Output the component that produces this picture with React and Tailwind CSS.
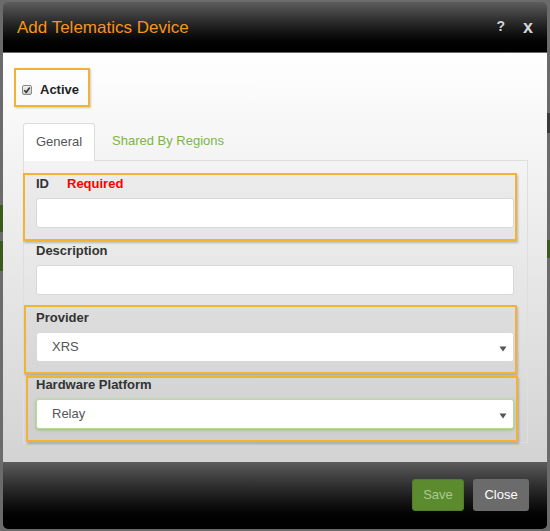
import React from "react";

const font = { fontFamily: '"Liberation Sans", Arial, sans-serif' };

function Field({ label, extra, children }) {
  return (
    <div className="relative">
      <div className="h-[17px] leading-[17px] text-[13px] font-bold text-[#333] mb-[6px] flex">
        <span>{label}</span>
        {extra ? <span className="ml-[18px] text-[#ff0000]">{extra}</span> : null}
      </div>
      {children}
    </div>
  );
}

function Arrow() {
  return (
    <svg width="8" height="6" viewBox="0 0 8 6" className="absolute right-[6px] top-[13px]">
      <path d="M0.5 0.5 H7.5 L4 5.5 Z" fill="#555" />
    </svg>
  );
}

export default function App() {
  return (
    <div className="relative w-[550px] h-[531px] bg-[#6b6b6b] pt-[2px] px-[3px] overflow-hidden" style={font}>
      {/* page content peeking behind the modal */}
      <div className="absolute left-0 top-[205px] w-[3px] h-[27px] bg-[#3d5a1d]" />
      <div className="absolute left-0 top-[241px] w-[3px] h-[30px] bg-[#3d5a1d]" />
      <div className="absolute right-0 top-[113px] w-[3px] h-[20px] bg-[#3a3a3a]" />
      <div className="absolute right-0 top-[240px] w-[3px] h-[18px] bg-[#3d5a1d]" />

      <div className="relative w-[544px] h-[527px] rounded-[5px] overflow-hidden flex flex-col">
        {/* header */}
        <div className="h-[51px] shrink-0 flex items-center justify-between pl-[14px] pr-[14px] bg-gradient-to-b from-[#5e5e5e] to-[#000] border-b border-[#6a6a6a]">
          <span className="text-[17px] text-[#f7941d] leading-none">Add Telematics Device</span>
          <div className="flex items-start gap-[18px] text-[#d4d4d4] font-bold">
            <span className="text-[14px] leading-none mt-[1px]">?</span>
            <span className="text-[18px] leading-none">x</span>
          </div>
        </div>

        {/* body */}
        <div className="h-[409px] shrink-0 bg-gradient-to-b from-[#ffffff] to-[#d2d3d2] pt-[15px]">
          <div className="ml-[11px] w-[76px] h-[39px] border-2 border-[#f2b233] shadow-[1px_1px_2px_rgba(0,0,0,0.2)] flex items-center pl-[6px] pt-[5px]">
            <svg width="10" height="10" viewBox="0 0 10 10">
              <defs>
                <linearGradient id="cb" x1="0" y1="0" x2="0" y2="1">
                  <stop offset="0" stopColor="#f4f4f4" />
                  <stop offset="1" stopColor="#c9c9c9" />
                </linearGradient>
              </defs>
              <rect x="0.5" y="0.5" width="9" height="9" rx="1.5" fill="url(#cb)" stroke="#8a8a8a" />
              <path d="M2.3 5.2 L4.2 7.2 L7.8 2.6" fill="none" stroke="#333" strokeWidth="1.6" />
            </svg>
            <span className="ml-[8px] text-[13px] font-bold text-[#222]">Active</span>
          </div>

          {/* tabs */}
          <div className="mt-[15px] ml-[20px] flex items-end h-[38px]">
            <div className="relative z-10 w-[72px] h-[38px] bg-white border border-b-0 border-[#dcdcdc] rounded-t-[3px] flex items-center justify-center text-[13px] text-[#555] mb-[-1px] pb-[2px]">
              General
            </div>
            <div className="h-[38px] flex items-center pl-[17px] text-[13px] text-[#7db544]">
              Shared By Regions
            </div>
          </div>

          {/* panel */}
          <div className="relative ml-[20px] w-[505px] h-[283px] border border-[#dedede] pt-[14px] pl-[12px] pr-[13px] pb-[13px] flex flex-col gap-[14px]">
            <div className="absolute left-[-1px] top-[12px] w-[494px] h-[68px] border-2 border-[#f2b233] bg-black/[0.025] shadow-[1px_2px_2px_rgba(0,0,0,0.22)]" />
            <div className="absolute left-0 top-[144px] w-[493px] h-[69px] border-2 border-[#f2b233] bg-black/[0.025] shadow-[1px_2px_2px_rgba(0,0,0,0.22)]" />
            <div className="absolute left-[2px] top-[215px] w-[492px] h-[66px] border-2 border-[#f2b233] bg-black/[0.025] shadow-[1px_2px_2px_rgba(0,0,0,0.22)]" />

            <Field label="ID" extra="Required">
              <div className="h-[30px] bg-white border border-[#d8d8d8] rounded-[3px]" />
            </Field>
            <Field label="Description">
              <div className="h-[30px] bg-white border border-[#d8d8d8] rounded-[3px]" />
            </Field>
            <Field label="Provider">
              <div className="relative h-[30px] bg-white border border-[#d8d8d8] rounded-[3px] flex items-center pl-[15px] text-[13px] text-[#555]">
                XRS
                <Arrow />
              </div>
            </Field>
            <Field label="Hardware Platform">
              <div className="relative h-[30px] bg-white border border-[#b7dc98] rounded-[3px] shadow-[0_1px_3px_rgba(125,181,68,0.7)] flex items-center pl-[15px] text-[13px] text-[#555]">
                Relay
                <Arrow />
              </div>
            </Field>
          </div>
        </div>

        {/* footer */}
        <div className="h-[67px] shrink-0 bg-gradient-to-b from-[#5c5c5c] to-[#000] flex items-start justify-end pt-[17px] pr-[18px] gap-[9px]">
          <div className="w-[52px] h-[32px] rounded-[3px] bg-[#5b8a2f] border border-[#527d2a] flex items-center justify-center text-[13px] text-[#abcb8f]">
            Save
          </div>
          <div className="w-[56px] h-[32px] rounded-[3px] bg-[#6b6b6b] flex items-center justify-center text-[13px] text-white">
            Close
          </div>
        </div>
      </div>
    </div>
  );
}
